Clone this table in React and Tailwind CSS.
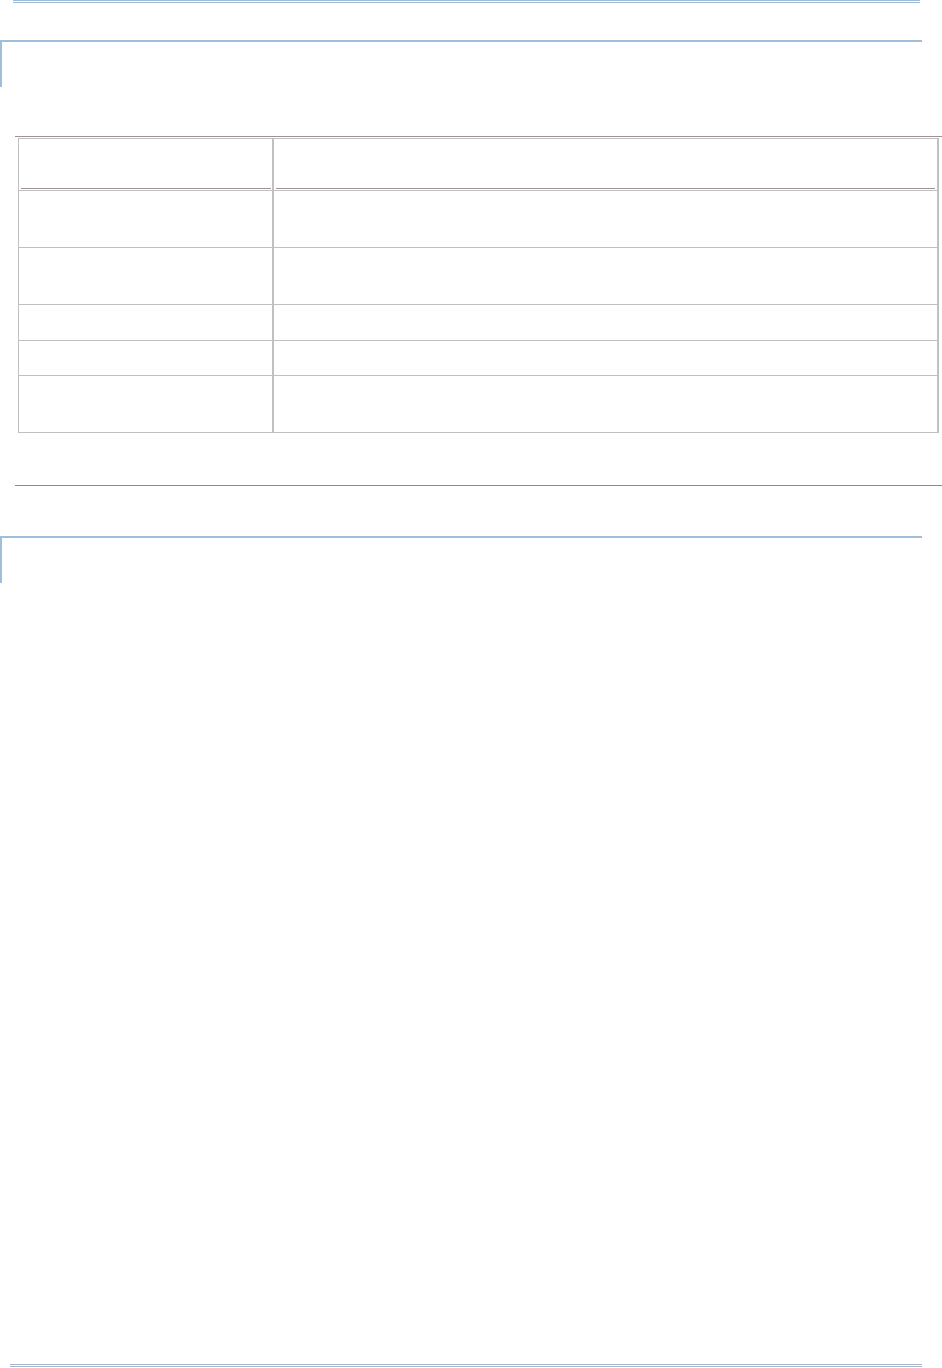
import React from "react";

// Blank page of a document export: heading rules, an empty table and footer rules.
const rows = [
  { h: "h-[57px]" },
  { h: "h-[57px]" },
  { h: "h-[36px]" },
  { h: "h-[35px]" },
  { h: "h-[57px]" },
];

function SectionHeading() {
  return <div className="w-[922px] h-[47px] border-t-2 border-l-2 border-[#9fbedc]" />;
}

export default function App() {
  return (
    <div className="h-[1368px] flex flex-col bg-white font-['Liberation_Sans',sans-serif]">
      {/* top double rule */}
      <div className="ml-[13px] w-[907px] h-[3px] border-y border-[#9dbbd9]" />

      <div className="mt-[37px]">
        <SectionHeading />
      </div>

      {/* rule above table */}
      <div className="mt-[49px] ml-[15px] w-[927px] h-px bg-[#9e9292]" />

      {/* table */}
      <div className="mt-px ml-[18px] w-[921px] border-l border-t border-b border-r-2 border-[#c0c0c0]">
        <div className="grid grid-cols-[255px_1fr] h-[51px]">
          <div className="border-r-2 border-[#c0c0c0] flex flex-col justify-end pb-px">
            <div className="ml-[2px] mr-px h-px bg-[#9e9292]" />
          </div>
          <div className="flex flex-col justify-end pb-px">
            <div className="ml-[2px] mr-[2px] h-px bg-[#9e9292]" />
          </div>
        </div>
        {rows.map((r, i) => (
          <div key={i} className={`grid grid-cols-[255px_1fr] border-t border-[#c0c0c0] ${r.h}`}>
            <div className="border-r-2 border-[#c0c0c0]" />
            <div />
          </div>
        ))}
      </div>

      {/* rule below table */}
      <div className="mt-[52px] ml-[15px] w-[927px] h-px bg-[#938888]" />

      <div className="mt-[50px]">
        <SectionHeading />
      </div>

      <div className="flex-1" />

      {/* bottom double rule */}
      <div className="ml-[10px] w-[912px] h-[3px] border-y border-[#a7b6cc] mb-px" />
    </div>
  );
}
